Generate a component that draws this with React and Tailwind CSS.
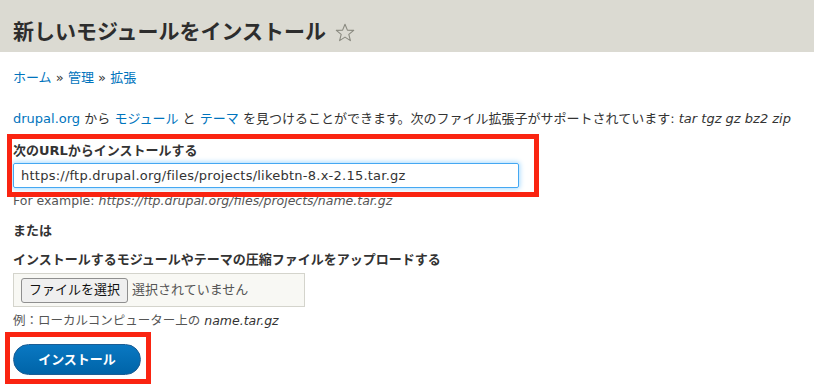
const FONT = { fontFamily: '"DejaVu Sans", "Noto Sans CJK JP", sans-serif' };

const Star = () => (
  <svg width="20" height="19" viewBox="0 0 20 19" className="ml-[9px] mt-[1px]">
    <path
      d="M10 1.2 L12.4 7.1 L18.7 7.4 L13.8 11.4 L15.4 17.6 L10 14.1 L4.6 17.6 L6.2 11.4 L1.3 7.4 L7.6 7.1 Z"
      fill="none"
      stroke="#8a8a80"
      strokeWidth="1.1"
      strokeLinejoin="round"
    />
  </svg>
);

// red annotation frame drawn over the screenshot
const Mark = ({ className }) => (
  <span className={`pointer-events-none absolute border-[5px] border-[#fa2411] ${className}`} />
);

export default function App() {
  return (
    <div className="min-h-screen w-[814px] bg-white text-[#333]" style={FONT}>
      <header className="h-[52px] bg-[#dbdad2] px-[13px] pt-[19px]">
        <h1 className="flex items-center text-[21px] font-bold leading-[26px] text-[#2d2d2d]">
          新しいモジュールをインストール
          <Star />
        </h1>
      </header>

      <main className="px-[13px] text-[13px] leading-[18px]">
        <nav className="mt-[17px]">
          <a className="text-[#0074bd]">ホーム</a> <span>»</span> <a className="text-[#0074bd]">管理</a>{' '}
          <span>»</span> <a className="text-[#0074bd]">拡張</a>
        </nav>

        <p className="mt-[23px] whitespace-nowrap">
          <a className="text-[#0074bd]">drupal.org</a> から <a className="text-[#0074bd]">モジュール</a> と{' '}
          <a className="text-[#0074bd]">テーマ</a> を見つけることができます。次のファイル拡張子がサポートされています:{' '}
          <em>tar tgz gz bz2 zip</em>
        </p>

        <div className="relative mt-[14px]">
          <Mark className="-left-[6px] -top-[8px] h-[63px] w-[532px]" />
          <label className="block font-bold">次のURLからインストールする</label>
          <div className="mt-[3px] flex h-[25px] w-[506px] items-center rounded-[2px] border border-[#45a8f2] px-[7px] tracking-[0.24px] shadow-[0_0_5px_1px_#a9dbff]">
            https://ftp.drupal.org/files/projects/likebtn-8.x-2.15.tar.gz
          </div>
          <p className="mt-[5px] text-[12.5px] leading-[16px] text-[#555]">
            For example: <em>https://ftp.drupal.org/files/projects/name.tar.gz</em>
          </p>
        </div>

        <p className="mt-[13px] font-bold">または</p>

        <label className="mt-[11px] block font-bold">インストールするモジュールやテーマの圧縮ファイルをアップロードする</label>
        <div className="mt-[4px] flex h-[34px] w-[292px] items-center gap-[4px] border border-[#d4d4cc] bg-[#f8f8f4] px-[7px]">
          <span className="flex h-[25px] items-center rounded-[3px] border border-[#8f8f8f] bg-[#efefef] px-[7px] text-[#111]">
            ファイルを選択
          </span>
          <span className="text-[#555]">選択されていません</span>
        </div>
        <p className="mt-[6px] text-[12.5px] leading-[16px] text-[#555]">
          例：ローカルコンピューター上の <em className="text-[#333]">name.tar.gz</em>
        </p>

        <div className="relative mt-[15px] w-fit">
          <Mark className="-left-[8px] -top-[12px] h-[52px] w-[146px]" />
          <button className="flex h-[31px] w-[128px] items-center justify-center rounded-full border border-[#1c5d94] bg-gradient-to-b from-[#0a78c2] to-[#0064a8] text-[13px] font-bold text-white">
            インストール
          </button>
        </div>
      </main>
    </div>
  );
}
